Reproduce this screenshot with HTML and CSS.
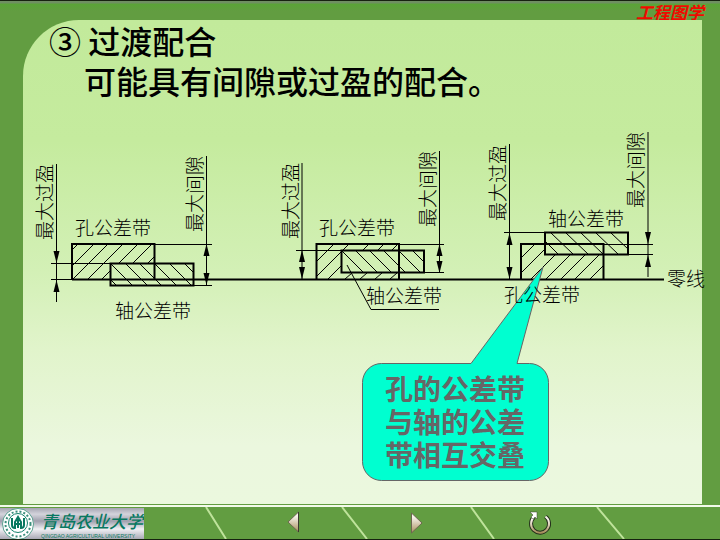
FILE: index.html
```html
<!DOCTYPE html>
<html lang="zh-CN">
<head>
<meta charset="utf-8">
<title>过渡配合</title>
<link rel="stylesheet" href="styles.css">
</head>
<body>
<div class="slide">
  <header class="topbar"><span class="course">工程图学</span></header>

  <main class="panel">
    <h1 class="title">③ 过渡配合</h1>
    <p class="lead">可能具有间隙或过盈的配合。</p>

    <svg class="diagram" viewBox="23 102 679 402" role="img" aria-label="过渡配合公差带图">
      <defs>
        <path id="tip" d="M0 0L-3 12H3Z"/>
      </defs>

      <!-- thin extension, dimension and hatch lines -->
      <g class="thin">
        <path d="M51 263.500H110M51 279.500H72M154 244.500H212M193 285.500H212M56.500 164V302M206.500 156V285"/>
        <path d="M78 244L72 250M94 244L72 266M108 244L73 279M123 244L88 279M138 244L119 263M110 271L102 279M152 244L133 263M154 257L148 263"/>
        <path d="M111 280L116 285M111 264L132 285M125 263L147 285M139 263L161 285M154 263L176 285M169 263L191 285M184 263L193 272"/>

        <path d="M296 250.500H341M399 244.500H444M424 272.500H444M302 163V279M439.500 151V273M347 265L371 309.500H439"/>
        <path d="M334 244L317 261M349 244L317 276M341 266L328 279M369 244L363 250M384 244L378 250M398 244L392 250M352 273L345 279M367 273L360 279M382 273L375 279M397 273L390 279"/>
        <path d="M342 251L363 272M356 251L377 272M370 251L391 272M384 251L405 272M399 251L420 272M413 251L424 262"/>

        <path d="M504 232.500H545M603 244.500H653M628 254.500H653M509.500 144V279M648 132V277"/>
        <path d="M535 244L521 258M545 249L521 273M555 255L531 279M570 255L546 279M585 255L561 279M599 255L575 279M603 266L590 279"/>
        <path d="M545 241L558 254M551 233L573 254M566 233L588 254M581 233L603 254M596 233L618 254M611 233L628 249"/>
      </g>

      <!-- tolerance zones and zero line -->
      <g class="thick">
        <path d="M72 279.500H664"/>
        <path d="M72 279V244H154.500V279M110.500 263.500H193.500V285.500H110.500Z"/>
        <path d="M316.500 279V244H399V279M341.500 250.500H424V272.500H341.500Z"/>
        <path d="M521 279V244H603.500V279M545 232.500H628V254.500H545Z"/>
      </g>

      <g class="arrows">
        <use href="#tip" transform="translate(56.500 263) rotate(180)"/>
        <use href="#tip" transform="translate(56.500 280)"/>
        <use href="#tip" transform="translate(206.500 244)"/>
        <use href="#tip" transform="translate(206.500 285) rotate(180)"/>
        <use href="#tip" transform="translate(302 250)"/>
        <use href="#tip" transform="translate(302 279) rotate(180)"/>
        <use href="#tip" transform="translate(439.500 244)"/>
        <use href="#tip" transform="translate(439.500 273) rotate(180)"/>
        <use href="#tip" transform="translate(509.500 233)"/>
        <use href="#tip" transform="translate(509.500 279) rotate(180)"/>
        <use href="#tip" transform="translate(648 244) rotate(180)"/>
        <use href="#tip" transform="translate(648 255)"/>
      </g>

      <path class="balloon" d="M381.500 363.500H471L543 267L517 363.500H529.500A19 19 0 0 1 548.500 382.500V461.500A19 19 0 0 1 529.500 480.500H381.500A19 19 0 0 1 362.500 461.500V382.500A19 19 0 0 1 381.500 363.500Z"/>

      <g class="label">
        <text x="75" y="235">孔公差带</text>
        <text x="115" y="318">轴公差带</text>
        <text x="319" y="235">孔公差带</text>
        <text x="366" y="303">轴公差带</text>
        <text x="548" y="226">轴公差带</text>
        <text x="504" y="302">孔公差带</text>
        <text x="667" y="286">零线</text>
        <text transform="translate(52 240) rotate(-90)">最大过盈</text>
        <text transform="translate(202 232) rotate(-90)">最大间隙</text>
        <text transform="translate(298 239) rotate(-90)">最大过盈</text>
        <text transform="translate(435 227) rotate(-90)">最大间隙</text>
        <text transform="translate(505 221) rotate(-90)">最大过盈</text>
        <text transform="translate(643 208) rotate(-90)">最大间隙</text>
      </g>

      <g class="note">
        <text x="455" y="400">孔的公差带</text>
        <text x="455" y="433">与轴的公差</text>
        <text x="455" y="466">带相互交叠</text>
      </g>
    </svg>
  </main>

  <footer class="footer">
    <svg class="slashes" viewBox="0 0 720 33" preserveAspectRatio="none" aria-hidden="true">
      <path d="M206 0L226 33M342 0L367 33M471 0L494 33M597 0L624 33"/>
    </svg>
    <div class="bar">
      <div class="school">
        <svg class="seal" viewBox="0 0 36 32" aria-hidden="true">
          <circle cx="18" cy="16" r="15.500" fill="#fff" stroke="#5aa090"/>
          <circle cx="18" cy="16" r="12.500" fill="none" stroke="#3a8f7c" stroke-width="2" stroke-dasharray="2 2"/>
          <circle cx="18" cy="15" r="9.500" fill="#fff" stroke="#15836c"/>
          <path d="M12 10V17Q12 20 15 20V14L18 9L21 14V20Q24 20 24 17V10M15 16H21M18 9V20" fill="none" stroke="#087860" stroke-width="2"/>
        </svg>
        <div class="names">
          <span class="zh">青岛农业大学</span>
          <span class="en">QINGDAO AGRICULTURAL UNIVERSITY</span>
        </div>
      </div>
      <nav class="nav">
        <button type="button" aria-label="上一页">
          <svg viewBox="0 0 24 24">
            <defs><linearGradient id="metal" x1="0" y1="0" x2="0" y2="1"><stop offset=".2" stop-color="#f8f4ec"/><stop offset="1" stop-color="#a88f5c"/></linearGradient></defs>
            <path d="M17.500 1V21L7 11Z" fill="url(#metal)" stroke="#6d6850"/>
            <path d="M17.500 1V21" stroke="#3c3a30"/>
          </svg>
        </button>
        <button type="button" aria-label="下一页">
          <svg viewBox="0 0 24 24"><path d="M6.500 2V22L17 12Z" fill="url(#metal)" stroke="#6d6850"/></svg>
        </button>
        <button type="button" aria-label="重新播放">
          <svg viewBox="0 0 24 24">
            <path d="M16.500 5.500A9 9 0 1 1 5 6" fill="none" stroke="#25301c" stroke-width="4"/>
            <path d="M16.500 5.500A9 9 0 1 1 5 6" fill="none" stroke="url(#metal)" stroke-width="2"/>
            <path d="M1 1H8V8L6 6L4 8L2 6L4 4Z" fill="#fff" stroke="#39422e" stroke-width=".5"/>
          </svg>
        </button>
      </nav>
    </div>
  </footer>
</div>
</body>
</html>
```
FILE: styles.css
```css
* {
  box-sizing: border-box;
}

body {
  margin: 0;
  background: #629d41;
  color: #000;
  font-family: "Noto Sans CJK SC", sans-serif;
}

.slide {
  display: flex;
  flex-direction: column;
  min-height: 100vh;
  border-top: 1px solid #16220f;
  border-bottom: 1px solid #16220f;
  background: linear-gradient(#6f8f62 0, #6f8f62 2px, #5aa437 3px, #629d41 10px);
}

.topbar {
  display: flex;
  justify-content: flex-end;
  height: 19px;
  padding-right: 16px;
}

.course {
  color: #f00a00;
  font-size: 17px;
  font-style: italic;
  font-weight: 700;
  line-height: 22px;
}

.panel {
  flex: 1;
  margin: 0 18px 0 23px;
  border-top-left-radius: 56px;
  background: linear-gradient(#c2ea9b 0%, #c5eb9e 25%, #d3f0b6 52%, #e1f4cb 68%, #ebf7de 88%, #ebf8de 100%);
}

.title,
.lead {
  margin: 0;
  font-size: 32px;
  font-weight: 500;
  line-height: 40px;
}

.title {
  padding-left: 26px;
}

.lead {
  padding: 0 0 2px 61px;
}

.diagram {
  display: block;
  width: 100%;
  overflow: visible;
}

.thin {
  fill: none;
  stroke: #000;
  stroke-width: 1;
}

.thick {
  fill: none;
  stroke: #000;
  stroke-width: 2;
}

.balloon {
  fill: #00ffd0;
  stroke: #666;
}

.label {
  font-size: 19px;
  font-weight: 300;
}

.note {
  fill: #666;
  font-size: 28px;
  font-weight: 700;
  text-anchor: middle;
}

.footer {
  display: grid;
  margin-top: 1px;
  border-top: 2px solid #f2faea;
}

.slashes,
.bar {
  grid-area: 1 / 1;
}

.slashes {
  width: 100%;
  height: 32px;
  fill: none;
  stroke: #bfe39b;
  stroke-width: 2;
}

.bar {
  display: grid;
  grid-template-columns: 144px 87fr 372fr 117fr;
  height: 32px;
}

.school {
  display: flex;
  margin-top: 1px;
  overflow: hidden;
  background: linear-gradient(#a5a5b2, #d4d4dc 20%, #a0a0ae 42%, #f0f0f4 68%, #a9a9b5);
  color: #087860;
}

.seal {
  flex: none;
  width: 36px;
  height: 32px;
}

.names {
  display: flex;
  flex-direction: column;
  padding-left: 5px;
  white-space: nowrap;
}

.zh {
  font-size: 17px;
  font-style: italic;
  font-weight: 500;
  line-height: 25px;
}

.en {
  font-family: "Liberation Sans", sans-serif;
  font-size: 5px;
  line-height: 6px;
}

.nav {
  display: grid;
  grid-column: 3;
  grid-template-columns: repeat(3, 1fr);
  place-items: center;
}

.nav button {
  display: block;
  padding: 0;
  border: 0;
  background: none;
  cursor: pointer;
}

.nav svg {
  display: block;
  width: 24px;
  height: 24px;
  overflow: visible;
}
```
